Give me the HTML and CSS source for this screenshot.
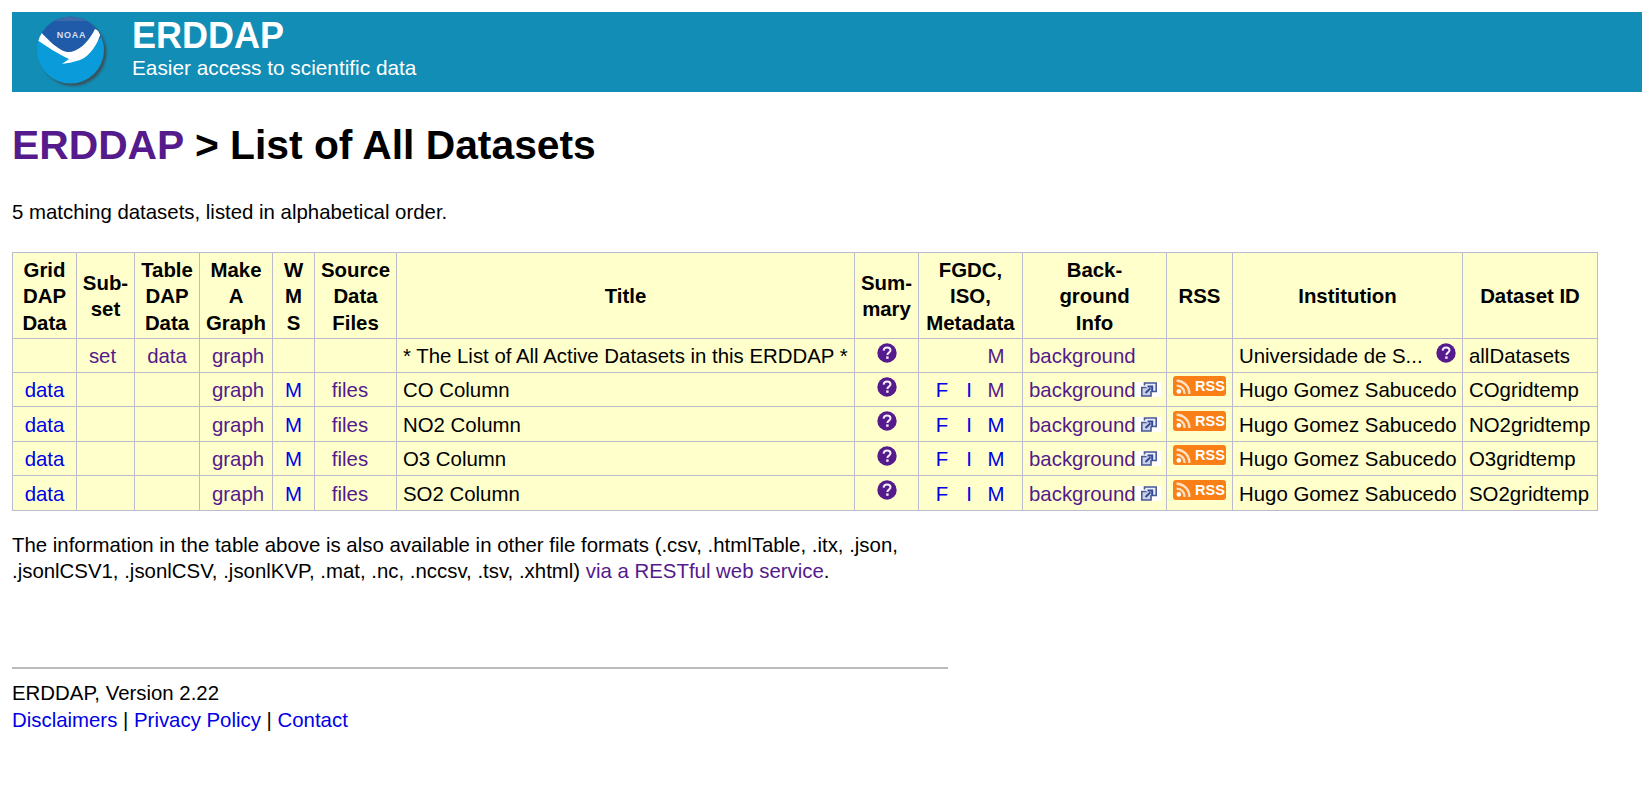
FILE: index.html
```html
<!DOCTYPE html>
<html lang="en">
<head>
<meta charset="UTF-8">
<title>ERDDAP - List of All Datasets</title>
<link rel="stylesheet" href="styles.css">
</head>
<body>
<div class="banner">
    <svg class="noaa-logo" width="76" height="76" viewBox="0 0 76 76">
        <defs>
            <clipPath id="disc"><circle cx="34.5" cy="36" r="33.5"/></clipPath>
            <filter id="soft"><feGaussianBlur stdDeviation="1.2"/></filter>
        </defs>
        <circle cx="37" cy="38.5" r="33.5" fill="#3f4a50" opacity="0.85" filter="url(#soft)"/>
        <g clip-path="url(#disc)">
            <rect width="76" height="76" fill="#0a9bdb"/>
            <path d="M0 0H70V18L50 40H24L0 24Z" fill="#1f5ba8"/>
            <path d="M0 0H70V7H0Z" fill="#3d6aa8"/>
            <path d="M4 17C12 26 22 36 31 38C40 39 52 30 59 15L65 18C62 30 54 42 44 46C38 48 32 49 26 50L33 45C22 40 10 32 1 26Z" fill="#fff"/>
        </g>
        <text class="noaa-text" x="35.5" y="23.5" text-anchor="middle">NOAA</text>
    </svg>
    <div class="banner-text">
        <div class="banner-title">ERDDAP</div>
        <div class="banner-sub">Easier access to scientific data</div>
    </div>
</div>

<h1 class="page-title"><a href="#" class="visited">ERDDAP</a> &gt; List of All Datasets</h1>

<p class="matching">5 matching datasets, listed in alphabetical order.</p>

<table class="datasets">
    <colgroup>
        <col class="c-griddap">
        <col class="c-subset">
        <col class="c-tabledap">
        <col class="c-graph">
        <col class="c-wms">
        <col class="c-files">
        <col class="c-title">
        <col class="c-summary">
        <col class="c-meta">
        <col class="c-info">
        <col class="c-rss">
        <col class="c-inst">
        <col class="c-id">
    </colgroup>
    <tr>
        <th>Grid<br>DAP<br>Data</th>
        <th>Sub-<br>set</th>
        <th>Table<br>DAP<br>Data</th>
        <th>Make<br>A<br>Graph</th>
        <th>W<br>M<br>S</th>
        <th>Source<br>Data<br>Files</th>
        <th>Title</th>
        <th>Sum-<br>mary</th>
        <th>FGDC,<br>ISO,<br>Metadata</th>
        <th>Back-<br>ground<br>Info</th>
        <th>RSS</th>
        <th>Institution</th>
        <th>Dataset ID</th>
    </tr>
    <tr>
        <td></td>
        <td class="mid set-cell"><a href="#" class="visited">set</a></td>
        <td class="mid"><a href="#" class="visited">data</a></td>
        <td class="mid graph-cell"><a href="#" class="visited">graph</a></td>
        <td></td>
        <td></td>
        <td>* The List of All Active Datasets in this ERDDAP *</td>
        <td class="mid"><svg class="q-icon" viewBox="0 0 20 20"><use href="#q"/></svg></td>
        <td class="meta"><span class="meta-slot"></span><span class="meta-slot"></span><a href="#" class="visited">M</a></td>
        <td><a href="#" class="visited">background</a></td>
        <td></td>
        <td><div class="inst-cell"><span>Universidade de S...</span><svg class="q-icon" viewBox="0 0 20 20"><use href="#q"/></svg></div></td>
        <td>allDatasets</td>
    </tr>
    <tr class="grid-row">
        <td class="mid"><a href="#">data</a></td>
        <td></td>
        <td></td>
        <td class="mid graph-cell"><a href="#" class="visited">graph</a></td>
        <td class="mid"><a href="#">M</a></td>
        <td class="mid files-cell"><a href="#" class="visited">files</a></td>
        <td>CO Column</td>
        <td class="mid"><svg class="q-icon" viewBox="0 0 20 20"><use href="#q"/></svg></td>
        <td class="meta"><a href="#">F</a><a href="#">I</a><a href="#" class="visited">M</a></td>
        <td><a href="#" class="visited">background</a><svg class="ext-icon" viewBox="0 0 25 15"><use href="#ext"/></svg></td>
        <td class="mid"><span class="rss-badge"><svg class="rss-waves" viewBox="0 0 16 16"><use href="#waves"/></svg>RSS</span></td>
        <td>Hugo Gomez Sabucedo</td>
        <td>COgridtemp</td>
    </tr>
    <tr class="grid-row">
        <td class="mid"><a href="#">data</a></td>
        <td></td>
        <td></td>
        <td class="mid graph-cell"><a href="#" class="visited">graph</a></td>
        <td class="mid"><a href="#">M</a></td>
        <td class="mid files-cell"><a href="#" class="visited">files</a></td>
        <td>NO2 Column</td>
        <td class="mid"><svg class="q-icon" viewBox="0 0 20 20"><use href="#q"/></svg></td>
        <td class="meta"><a href="#">F</a><a href="#">I</a><a href="#">M</a></td>
        <td><a href="#" class="visited">background</a><svg class="ext-icon" viewBox="0 0 25 15"><use href="#ext"/></svg></td>
        <td class="mid"><span class="rss-badge"><svg class="rss-waves" viewBox="0 0 16 16"><use href="#waves"/></svg>RSS</span></td>
        <td>Hugo Gomez Sabucedo</td>
        <td>NO2gridtemp</td>
    </tr>
    <tr class="grid-row">
        <td class="mid"><a href="#">data</a></td>
        <td></td>
        <td></td>
        <td class="mid graph-cell"><a href="#" class="visited">graph</a></td>
        <td class="mid"><a href="#">M</a></td>
        <td class="mid files-cell"><a href="#" class="visited">files</a></td>
        <td>O3 Column</td>
        <td class="mid"><svg class="q-icon" viewBox="0 0 20 20"><use href="#q"/></svg></td>
        <td class="meta"><a href="#">F</a><a href="#">I</a><a href="#">M</a></td>
        <td><a href="#" class="visited">background</a><svg class="ext-icon" viewBox="0 0 25 15"><use href="#ext"/></svg></td>
        <td class="mid"><span class="rss-badge"><svg class="rss-waves" viewBox="0 0 16 16"><use href="#waves"/></svg>RSS</span></td>
        <td>Hugo Gomez Sabucedo</td>
        <td>O3gridtemp</td>
    </tr>
    <tr class="grid-row">
        <td class="mid"><a href="#">data</a></td>
        <td></td>
        <td></td>
        <td class="mid graph-cell"><a href="#" class="visited">graph</a></td>
        <td class="mid"><a href="#">M</a></td>
        <td class="mid files-cell"><a href="#" class="visited">files</a></td>
        <td>SO2 Column</td>
        <td class="mid"><svg class="q-icon" viewBox="0 0 20 20"><use href="#q"/></svg></td>
        <td class="meta"><a href="#">F</a><a href="#">I</a><a href="#">M</a></td>
        <td><a href="#" class="visited">background</a><svg class="ext-icon" viewBox="0 0 25 15"><use href="#ext"/></svg></td>
        <td class="mid"><span class="rss-badge"><svg class="rss-waves" viewBox="0 0 16 16"><use href="#waves"/></svg>RSS</span></td>
        <td>Hugo Gomez Sabucedo</td>
        <td>SO2gridtemp</td>
    </tr>
</table>

<p class="formats">The information in the table above is also available in other file formats (.csv, .htmlTable, .itx, .json,<br>
.jsonlCSV1, .jsonlCSV, .jsonlKVP, .mat, .nc, .nccsv, .tsv, .xhtml) <a href="#" class="visited">via a RESTful web service</a>.</p>

<hr class="rule">

<div class="footer">
    ERDDAP, Version 2.22<br>
    <a href="#">Disclaimers</a> | <a href="#">Privacy Policy</a> | <a href="#">Contact</a>
</div>

<svg class="icon-defs" width="0" height="0">
    <defs>
        <g id="q">
            <circle cx="10" cy="10" r="9.7" fill="#551a8b"/>
            <path d="M6.6 7.6C6.8 5.4 8.3 4.4 10.1 4.4C12.1 4.4 13.5 5.6 13.5 7.3C13.5 9.6 10.4 9.6 10.4 12" fill="none" stroke="#f3eef8" stroke-width="2"/>
            <rect x="9.2" y="13.4" width="2.4" height="2.4" fill="#f3eef8"/>
        </g>
        <g id="ext">
            <rect width="25" height="15" fill="#fff"/>
            <path d="M5.8 5.5H15V14H5.8Z" fill="#c9d2e6" stroke="#4a5a94" stroke-width="1.6"/>
            <path d="M8.5 3.5V1H20.2V9.5H15" fill="#e9edf6" stroke="#4a5a94" stroke-width="1.6"/>
            <path d="M9.5 11L14.5 6.2M11.5 4.6H16.2V9.2" fill="none" stroke="#2f4a9c" stroke-width="2"/>
        </g>
        <g id="waves">
            <circle cx="3.6" cy="12.6" r="2.2" fill="#fff"/>
            <path d="M1.5 7.2A7.3 7.3 0 0 1 9 15M1.5 2.6A12 12 0 0 1 13.5 15" fill="none" stroke="#ffe2c4" stroke-width="2.3"/>
        </g>
    </defs>
</svg>
</body>
</html>
```
FILE: styles.css
```css
body {
    font-family: "Liberation Sans", Arial, sans-serif;
    font-size: 20.4px;
    line-height: 26.5px;
    margin: 12px 0 12px 12px;
    color: #000;
    background: #fff;
}
a {
    color: #0000e6;
    text-decoration: none;
}
a.visited {
    color: #551a8b;
}

.banner {
    display: flex;
    align-items: center;
    height: 80px;
    background: #128db5;
    color: #fff;
}
.noaa-logo {
    margin-left: 24px;
    flex: none;
}
.noaa-text {
    font-family: "Liberation Sans", Arial, sans-serif;
    font-size: 9px;
    font-weight: bold;
    letter-spacing: 0.8px;
    fill: #d5deee;
}
.banner-text {
    margin-left: 20px;
    padding-bottom: 8px;
}
.banner-title {
    font-size: 36px;
    font-weight: bold;
    line-height: 40px;
}
.banner-sub {
    font-size: 20.8px;
    line-height: 24px;
}

.page-title {
    font-size: 40.8px;
    line-height: 48px;
    margin: 29px 0 0;
}
.matching {
    margin: 30px 0 0;
}

.datasets {
    border-collapse: collapse;
    table-layout: fixed;
    background: #ffffcc;
    margin-top: 26px;
    width: 1585px;
}
.c-griddap { width: 64px; }
.c-subset { width: 58px; }
.c-tabledap { width: 65px; }
.c-graph { width: 73px; }
.c-wms { width: 42px; }
.c-files { width: 82px; }
.c-title { width: 458px; }
.c-summary { width: 64px; }
.c-meta { width: 104px; }
.c-info { width: 144px; }
.c-rss { width: 66px; }
.c-inst { width: 230px; }
.c-id { width: 135px; }

.datasets th, .datasets td {
    border: 1px solid #bbbbcc;
    padding: 4px 6px 2px;
    white-space: nowrap;
}
.datasets th {
    padding: 4px 0 2px;
    text-align: center;
}
.grid-row td {
    height: 27.5px;
}
td.mid {
    text-align: center;
}
.datasets td.set-cell {
    padding-right: 12px;
}
.datasets td.graph-cell {
    padding-left: 10px;
}
.datasets td.files-cell {
    padding-right: 17px;
}
.datasets td.meta {
    padding: 4px 3px 2px 0;
    text-align: center;
}
.meta a, .meta-slot {
    display: inline-block;
    width: 17px;
    margin: 0 5px;
}
.inst-cell {
    display: flex;
    justify-content: space-between;
    align-items: center;
}
.q-icon {
    width: 20px;
    height: 20px;
    margin-top: -10px;
    vertical-align: middle;
}
.inst-cell .q-icon {
    margin-top: -6px;
}
.ext-icon {
    width: 25px;
    height: 15px;
    vertical-align: 0;
}
.rss-badge {
    display: inline-flex;
    align-items: center;
    width: 53px;
    height: 20px;
    box-sizing: border-box;
    margin-top: -11px;
    padding-left: 2px;
    border-radius: 3px;
    background: #f97f16;
    color: #fff;
    font-size: 14.5px;
    line-height: 20px;
    font-weight: bold;
    vertical-align: middle;
}
.rss-waves {
    width: 17px;
    height: 17px;
    margin-right: 3px;
}
.icon-defs {
    position: absolute;
}

.formats {
    margin: 21px 0 0;
}
.rule {
    width: 936px;
    margin: 82px 0 0;
    border: 0;
    border-top: 2px solid #bbb;
    height: 0;
}
.footer {
    margin-top: 11px;
    line-height: 27px;
}
```
